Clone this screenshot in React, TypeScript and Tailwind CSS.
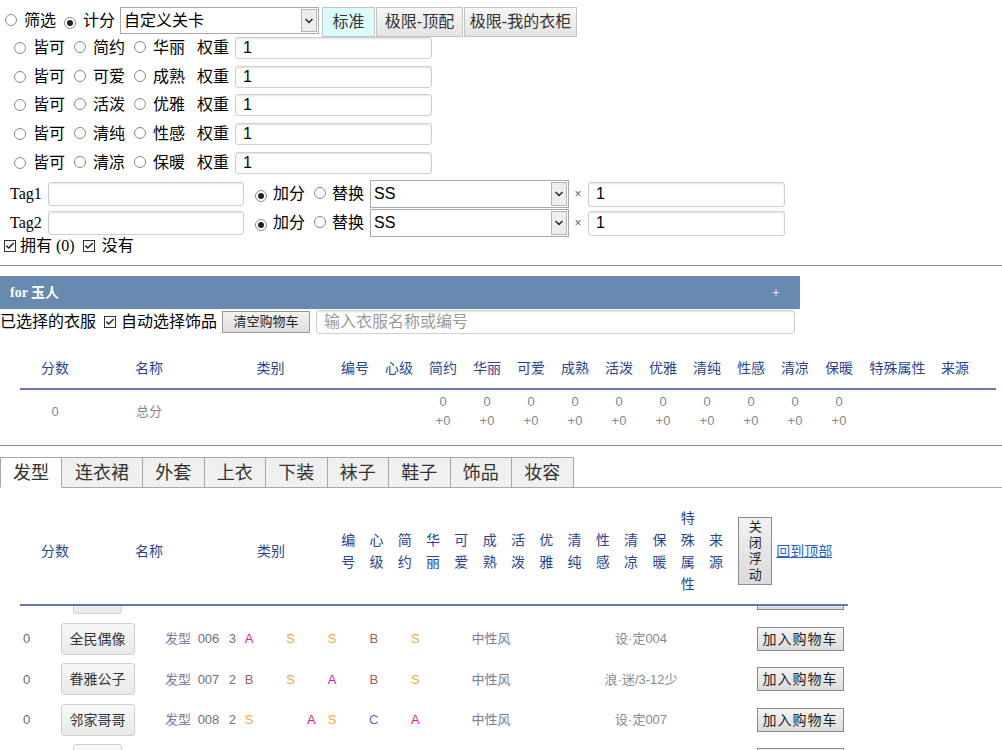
import { Check, ChevronDown } from 'lucide-react';

const sans = "font-['Liberation_Sans','Noto_Sans_CJK_SC',sans-serif]";
const serif = "font-['Liberation_Serif','Noto_Sans_CJK_SC',serif]";

function Radio({ checked = false }: { checked?: boolean }) {
  return (
    <span className="inline-flex h-[12px] w-[12px] shrink-0 items-center justify-center rounded-full border border-[#8a8a8a] bg-white">
      {checked && <span className="h-[6px] w-[6px] rounded-full bg-[#222]" />}
    </span>
  );
}

function Box() {
  return (
    <span className="inline-flex h-[12px] w-[12px] shrink-0 items-center justify-center border border-[#333] bg-white text-[#222]">
      <Check size={10} strokeWidth={3.5} />
    </span>
  );
}

function Select({ value, width, height }: { value: string; width: string; height: string }) {
  return (
    <div className={`flex items-stretch border border-[#a9a9a9] bg-white ${width} ${height}`}>
      <span className="flex flex-1 items-center pl-[3px] text-[16px] leading-none text-black">{value}</span>
      <span className="m-px flex w-[16px] items-center justify-center border border-[#b5b5b5] bg-[#eeeeee] text-[#333]">
        <ChevronDown size={12} strokeWidth={3.5} />
      </span>
    </div>
  );
}

function Field({ value = '', placeholder = '', width, height }: { value?: string; placeholder?: string; width: string; height: string }) {
  return (
    <input
      readOnly
      value={value}
      placeholder={placeholder}
      className={`${width} ${height} rounded-[3px] border border-[#cfcfcf] bg-white pl-[7px] text-[16px] text-black shadow-[inset_0_1px_2px_rgba(0,0,0,0.12)] outline-none placeholder:text-[#9a9a9a]`}
    />
  );
}

const pairs = [
  ['简约', '华丽'],
  ['可爱', '成熟'],
  ['活泼', '优雅'],
  ['清纯', '性感'],
  ['清凉', '保暖'],
];

const attrs = ['简约', '华丽', '可爱', '成熟', '活泼', '优雅', '清纯', '性感', '清凉', '保暖'];
const tabs = ['发型', '连衣裙', '外套', '上衣', '下装', '袜子', '鞋子', '饰品', '妆容'];

const gradeColor: Record<string, string> = {
  A: 'text-[#e0209a]',
  S: 'text-[#f0a848]',
  B: 'text-[#a85a62]',
  C: 'text-[#4f72c0]',
};

type Row = { id: string; name: string; no: string; heart: string; grades: string[]; special: string; source: string; partial?: boolean };

const empty = ['', '', '', '', '', '', '', '', '', ''];

// first and last rows only peek out from under the floating header / page bottom
const rows: Row[] = [
  { id: 'r5', name: '', no: '', heart: '', grades: empty, special: '', source: '', partial: true },
  { id: 'r6', name: '全民偶像', no: '006', heart: '3', grades: ['A', '', 'S', '', 'S', '', 'B', '', 'S', ''], special: '中性风', source: '设·定004' },
  { id: 'r7', name: '眷雅公子', no: '007', heart: '2', grades: ['B', '', 'S', '', 'A', '', 'B', '', 'S', ''], special: '中性风', source: '浪·迷/3-12少' },
  { id: 'r8', name: '邻家哥哥', no: '008', heart: '2', grades: ['S', '', '', 'A', 'S', '', 'C', '', 'A', ''], special: '中性风', source: '设·定007' },
  { id: 'r9', name: '', no: '', heart: '', grades: empty, special: '', source: '', partial: true },
];

export default function App() {
  return (
    <div className={`h-[750px] w-[1002px] overflow-hidden bg-white text-black ${sans}`}>
      {/* mode row */}
      <div className="mt-[7px] flex h-[27px] items-center text-[16px] leading-none">
        <span className="ml-[5px]"><Radio /></span>
        <span className="ml-[7px]">筛选</span>
        <span className="ml-[8px]"><Radio checked /></span>
        <span className="ml-[7px]">计分</span>
        <span className="ml-[5px]"><Select value="自定义关卡" width="w-[199px]" height="h-[27px]" /></span>
        <div className="ml-[3px] flex h-[30px] gap-px self-start text-[16px] text-[#333]">
          <button className="w-[53px] border border-[#c4c4c4] bg-[#dcfbfb]">标准</button>
          <button className="w-[87px] border border-[#c4c4c4] bg-gradient-to-b from-[#f7f7f7] to-[#e4e4e4]">极限-顶配</button>
          <button className="w-[113px] border border-[#c4c4c4] bg-gradient-to-b from-[#f7f7f7] to-[#e4e4e4]">极限-我的衣柜</button>
        </div>
      </div>

      {/* weights */}
      {pairs.map(([a, b]) => (
        <div key={a} className="flex h-[28.6px] items-center pl-[14px] text-[16px] leading-none">
          <Radio />
          <span className="ml-[7px]">皆可</span>
          <span className="ml-[9px]"><Radio /></span>
          <span className="ml-[7px]">{a}</span>
          <span className="ml-[9px]"><Radio /></span>
          <span className="ml-[7px]">{b}</span>
          <span className="ml-[12px]">权重</span>
          <span className="ml-[6px]"><Field value="1" width="w-[197px]" height="h-[22px]" /></span>
        </div>
      ))}

      {/* tags */}
      <div className="mt-[3px]">
        {['Tag1', 'Tag2'].map((t) => (
          <div key={t} className="flex h-[29px] items-center pl-[10px] text-[16px] leading-none">
            <span className={`w-[33px] ${serif}`}>{t}</span>
            <span className="ml-[5px]"><Field width="w-[196px]" height="h-[24px]" /></span>
            <span className="ml-[11px]"><Radio checked /></span>
            <span className="ml-[6px]">加分</span>
            <span className="ml-[9px]"><Radio /></span>
            <span className="ml-[6px]">替换</span>
            <span className="ml-[6px]"><Select value="SS" width="w-[199px]" height="h-[28px]" /></span>
            <span className="ml-[4px] w-[10px] text-center text-[12px] text-[#666]">×</span>
            <span className="ml-[5px]"><Field value="1" width="w-[197px]" height="h-[25px]" /></span>
          </div>
        ))}
      </div>

      <div className="flex h-[17px] items-center pl-[4px] text-[16px] leading-none">
        <Box />
        <span className="ml-[4px]">拥有</span>
        <span className={`ml-[4px] ${serif}`}>(0)</span>
        <span className="ml-[8px]"><Box /></span>
        <span className="ml-[7px]">没有</span>
      </div>

      <div className="mt-[10px] border-t border-[#8c8c8c]" />

      {/* panel title */}
      <div className={`mt-[10px] flex h-[33px] w-[800px] items-center justify-between bg-[#6889b0] pl-[10px] pr-[20px] text-[14px] font-bold text-white ${serif}`}>
        <span>for 玉人</span>
        <span className="font-normal">+</span>
      </div>

      {/* cart row */}
      <div className="flex h-[26px] items-center text-[16px] leading-none">
        <span>已选择的衣服</span>
        <span className="ml-[8px]"><Box /></span>
        <span className="ml-[5px]">自动选择饰品</span>
        <button className="ml-[5px] h-[22px] w-[88px] border border-[#999] bg-gradient-to-b from-[#f4f4f4] to-[#dedede] text-[13px] text-[#222]">清空购物车</button>
        <span className="ml-[6px]"><Field placeholder="输入衣服名称或编号" width="w-[479px]" height="h-[24px]" /></span>
      </div>

      {/* totals table */}
      <div className="ml-[20px] mt-[13px] w-[976px]">
        <div className="grid h-[42px] grid-cols-[70px_118px_125px_repeat(12,44px)_73px_42px] items-center border-b-2 border-[#6d7ab6] text-center text-[14px] leading-none text-[#2a4590]">
          <span>分数</span>
          <span>名称</span>
          <span>类别</span>
          <span>编号</span>
          <span>心级</span>
          {attrs.map((a) => (
            <span key={a}>{a}</span>
          ))}
          <span>特殊属性</span>
          <span>来源</span>
        </div>
        <div className="grid h-[43px] grid-cols-[70px_118px_125px_repeat(12,44px)_73px_42px] items-center text-center text-[13px] leading-[19px] text-[#888]">
          <span>0</span>
          <span>总分</span>
          <span />
          <span />
          <span />
          {attrs.map((a) => (
            <span key={a} className="flex flex-col">
              <span>0</span>
              <span>+0</span>
            </span>
          ))}
          <span />
          <span />
        </div>
      </div>

      <div className="mt-[12px] border-t border-[#8c8c8c]" />

      {/* category tabs */}
      <div className="mt-[11px] flex h-[31px] items-end border-b border-[#a8a8a8] text-[18px] leading-none text-[#333]">
        {tabs.map((t, i) => (
          <span
            key={t}
            className={
              i === 0
                ? '-mb-px flex h-[31px] w-[62px] items-center justify-center border border-[#a8a8a8] border-b-white bg-white pt-[2px]'
                : t.length === 3
                  ? '-mb-px flex h-[31px] w-[81px] items-center justify-center border border-l-0 border-[#a8a8a8] bg-[#f0f0f0] pt-[2px]'
                  : '-mb-px flex h-[31px] w-[61.5px] items-center justify-center border border-l-0 border-[#a8a8a8] bg-[#f0f0f0] pt-[2px]'
            }
          >
            {t}
          </span>
        ))}
      </div>

      {/* floating header */}
      <div className="ml-[20px] flex h-[118px] w-[828px] items-center border-b-2 border-[#6b72b2] pt-[10px] text-[14px] text-[#2a4590]">
        <span className="w-[70px] text-center leading-none">分数</span>
        <span className="w-[118px] text-center leading-none">名称</span>
        <span className="w-[126px] text-center leading-none">类别</span>
        {['编号', '心级', ...attrs, '特殊属性', '来源'].map((h) => (
          <span key={h} className="flex w-[28.3px] justify-center">
            <span className="w-[15px] break-all text-center leading-[22px]">{h}</span>
          </span>
        ))}
        <button className="ml-[8px] flex h-[68px] w-[34px] items-center justify-center border border-[#8a8a8a] bg-gradient-to-b from-[#f2f2f2] to-[#dadada] text-[13px] leading-[16px] text-[#222]">
          <span className="w-[13px] break-all">关闭浮动</span>
        </button>
        <a className="ml-[4px] text-[14px] leading-none text-[#2462c4] underline">回到顶部</a>
      </div>

      {/* clothes list */}
      <div className="h-[200px] overflow-hidden">
        <div className="-mt-[27.75px] w-[848px] text-[13px] leading-none">
          {rows.map((r) => (
            <div key={r.id} className="flex h-[40.5px] items-center">
              <span className="ml-[20px] w-[36px] pl-[3px] text-[#66668a]">{r.partial ? '' : '0'}</span>
              <span className="flex w-[83px] justify-center">
                {r.partial ? (
                  <span className="h-[32px] w-[49px] rounded-[3px] border border-[#cfcfcf] bg-gradient-to-b from-[#f8f8f8] to-[#e9e9e9]" />
                ) : (
                  <button className="h-[32px] rounded-[3px] border border-[#cfcfcf] bg-gradient-to-b from-[#f8f8f8] to-[#e9e9e9] px-[8px] text-[14px] text-[#333]">
                    {r.name}
                  </button>
                )}
              </span>
              <span className="ml-[26px] w-[27px] text-[#7b7bab]">{r.partial ? '' : '发型'}</span>
              <span className="ml-[5px] w-[23px] text-center text-[#707070]">{r.no}</span>
              <span className="ml-[6px] w-[12.6px] text-center text-[#707070]">{r.heart}</span>
              {r.grades.map((g, i) => (
                <span key={i} className={`w-[20.8px] text-center ${gradeColor[g] ?? ''}`}>
                  {g}
                </span>
              ))}
              <span className="w-[89px] text-center text-[#7a7aa0]">{r.special}</span>
              <span className="w-[211px] text-center text-[#8a8a8a]">{r.source}</span>
              {r.partial ? (
                <span className="ml-[10px] h-[24px] w-[87px] border border-[#8a8a8a] bg-gradient-to-b from-[#f4f4f4] to-[#dcdcdc]" />
              ) : (
                <button className="ml-[10px] h-[24px] w-[87px] border border-[#8a8a8a] bg-gradient-to-b from-[#f4f4f4] to-[#dcdcdc] text-[14px] tracking-[1px] text-[#222]">
                  加入购物车
                </button>
              )}
            </div>
          ))}
        </div>
      </div>
    </div>
  );
}
